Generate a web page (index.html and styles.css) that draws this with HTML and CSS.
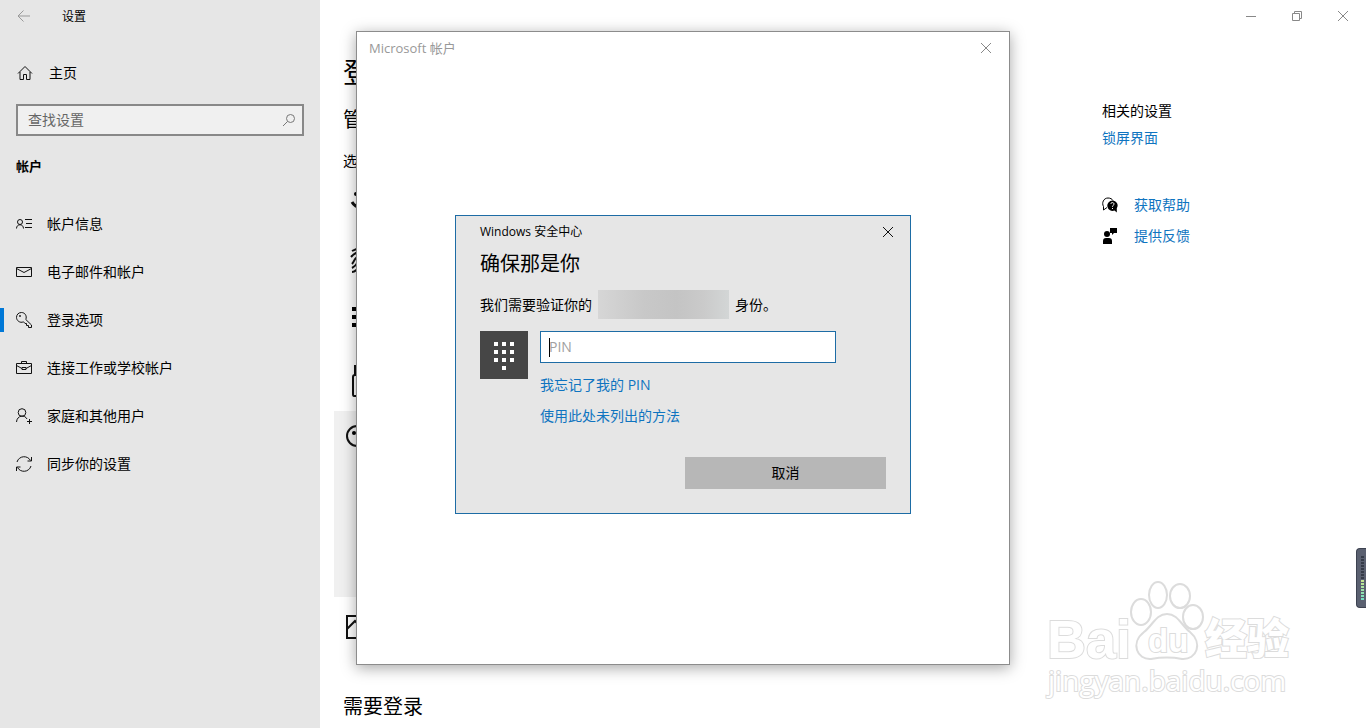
FILE: index.html
```
<!DOCTYPE html>
<html lang="zh-CN">
<head>
	<meta charset="UTF-8">
	<title>设置</title>
	<link rel="stylesheet" href="styles.css">
</head>
<body>
	<aside class="sidebar">
		<div class="titlebar">
			<button class="back" aria-label="返回"><svg width="14" height="14" viewBox="0 0 14 14"><path d="M13 7H1M6.500 1.500L1 7l5.500 5.500"/></svg></button>
			<span class="apptitle">设置</span>
		</div>
		<a class="home" href="#"><svg width="16" height="16" viewBox="0 0 16 16"><path d="M1 8.500L8 1.500l7 7M3 7v7.500h3.500V9.500h3v5H13V7"/></svg>主页</a>
		<div class="search">
			<input type="text" placeholder="查找设置" aria-label="查找设置">
			<svg width="14" height="14" viewBox="0 0 14 14"><circle cx="8.500" cy="5.500" r="4"/><path d="M5.500 8.500L1 13"/></svg>
		</div>
		<h2>帐户</h2>
		<nav>
			<a href="#"><svg width="16" height="16" viewBox="0 0 16 16"><circle cx="4" cy="6" r="2.500"/><path d="M.5 12.500C.5 7.500 7.500 7.500 7.500 12.500M9 3.500h7M10 7.500h6M9 11.500h7"/></svg>帐户信息</a>
			<a href="#"><svg width="16" height="16" viewBox="0 0 16 16"><path d="M.5 3.500h15v9H.5zM.5 4.500L8 8.500l7.500-4"/></svg>电子邮件和帐户</a>
			<a href="#" class="active"><svg width="16" height="16" viewBox="0 0 16 16"><path d="M9.800 7.500L15.500 13v2.500H12.500V13.500H10.500V11.500H9L7.500 9.800C4 11.500.5 8.500.5 5.500C.5 2.500 2.500.5 5.500.5C9 .5 11.200 4 9.800 7.500z"/><circle cx="4" cy="4" r=".6"/></svg>登录选项</a>
			<a href="#"><svg width="16" height="16" viewBox="0 0 16 16"><path d="M.5 3.500h15v10H.5zM5.500 3.500v-2h5v2M.5 5.500l5.500 3M15.500 5.500L10 8.500M6 7.500h4v2H6z"/></svg>连接工作或学校帐户</a>
			<a href="#"><svg width="16" height="16" viewBox="0 0 16 16"><circle cx="6" cy="4.500" r="3.800"/><path d="M.5 14C1 7 9 6.500 11 11M13.500 11v5M11 13.500h5"/></svg>家庭和其他用户</a>
			<a href="#"><svg width="16" height="16" viewBox="0 0 16 16"><path d="M1 6C3 -.5 11.500-1 14.500 4.500M15.500 1v4h-4M15 10C13 16.500 4.500 17 1.500 11.500M.5 15v-4h4"/></svg>同步你的设置</a>
		</nav>
	</aside>
	<main>
		<div class="titlebar controls">
			<button aria-label="最小化"><svg width="10" height="10" viewBox="0 0 10 10"><path d="M0 5.500h10"/></svg></button>
			<button aria-label="还原"><svg width="10" height="10" viewBox="0 0 10 10"><path d="M.5 2.500h7v7h-7zM2.500 2.500v-2h7v7h-2"/></svg></button>
			<button aria-label="关闭"><svg width="10" height="10" viewBox="0 0 10 10"><path d="M0 0l10 10M10 0L0 10"/></svg></button>
		</div>
		<div class="columns">
			<section class="content">
				<h1>登录</h1>
				<h3>管理登录方式</h3>
				<p>选择登录选项</p>
				<ul class="options">
					<li><svg width="32" height="32" viewBox="0 0 32 32"><g class="solid"><circle cx="12" cy="9" r="2"/><circle cx="21" cy="9" r="2"/></g><path class="thick" d="M8 17C12 24 21 24 25 17"/></svg></li>
					<li><svg width="32" height="32" viewBox="0 0 32 32"><path d="M8 6C13 3 20 3 25 6M7 12C13 5 22 5 25 12M8 19C11 16 10 12 16 11C23 11 23 18 22 24M8 23C14 20 13 16 16 15C20 16 18 22 17 27M8 27C12 27 14 24 16 20"/></svg></li>
					<li><svg class="solid" width="32" height="32" viewBox="0 0 32 32"><path d="M8 2h4v4H8zM16 2h4v4h-4zM24 2h4v4h-4zM8 10h4v4H8zM16 10h4v4h-4zM24 10h4v4h-4zM8 18h4v4H8zM16 18h4v4h-4zM24 18h4v4h-4zM16 26h4v4h-4z"/></svg></li>
					<li><svg width="32" height="32" viewBox="0 0 32 32"><path d="M11 10V1h11v9M9 12q0-2 2-2h11q2 0 2 2v19H10q-1 0-1-2z"/></svg></li>
					<li class="selected"><svg width="32" height="32" viewBox="0 0 32 32"><circle cx="13" cy="11" r="10"/><circle class="solid" cx="10" cy="8" r="2"/></svg></li>
					<li><svg width="32" height="32" viewBox="0 0 32 32"><path d="M3 5h26v22H3zM3 18l8-8 8 8 4-4 6 6"/></svg></li>
				</ul>
				<h3 class="require">需要登录</h3>
			</section>
			<section class="related">
				<h4>相关的设置</h4>
				<a href="#">锁屏界面</a>
				<div class="support">
					<a href="#"><svg width="16" height="16" viewBox="0 0 16 16"><path class="bubble" d="M5 10.500L1.500 13V9.500C-.5 6 1.500 1 6 1C8.500 1 10 2 11 3.500"/><path class="solid" d="M10.500 3.500a5 5 0 0 1 4.300 7.700V15.500L12.500 13.500A5.200 5.200 0 1 1 10.500 3.500z"/><path class="mark" d="M8.800 7C9 5 12.200 5.200 12 7.200C11.800 8.300 10.500 8.300 10.500 9.800M10.500 11v1"/></svg>获取帮助</a>
					<a href="#"><svg class="solid" width="16" height="16" viewBox="0 0 16 16"><circle cx="5" cy="6" r="3"/><path d="M1 16v-3q0-3 3-3h3q3 0 3 3v3zM8 0h7v5h-3l-2 2V5H8z"/></svg>提供反馈</a>
				</div>
			</section>
		</div>
	</main>

	<!-- account window -->
	<div class="layer account-layer">
		<div class="account">
			<span>Microsoft 帐户</span>
			<button aria-label="关闭"><svg width="10" height="10" viewBox="0 0 10 10"><path d="M0 0l10 10M10 0L0 10"/></svg></button>
		</div>
	</div>

	<!-- pin dialog -->
	<div class="layer">
		<form class="dialog">
			<div class="dialog-head">
				<span>Windows 安全中心</span>
				<button type="button" aria-label="关闭"><svg width="10" height="10" viewBox="0 0 10 10"><path d="M0 0l10 10M10 0L0 10"/></svg></button>
			</div>
			<h2>确保那是你</h2>
			<p class="verify">我们需要验证你的<span class="masked"></span>身份。</p>
			<div class="pin">
				<div class="keypad"><svg class="solid" width="20" height="28" viewBox="0 0 20 28"><path d="M0 0h4v4H0zM8 0h4v4H8zM16 0h4v4h-4zM0 8h4v4H0zM8 8h4v4H8zM16 8h4v4h-4zM0 16h4v4H0zM8 16h4v4H8zM16 16h4v4h-4zM8 24h4v4H8z"/></svg></div>
				<div class="fields">
					<div class="pinbox"><input type="password" placeholder="PIN" aria-label="PIN"></div>
					<a href="#">我忘记了我的 PIN</a>
					<a href="#">使用此处未列出的方法</a>
				</div>
			</div>
			<button type="button" class="cancel">取消</button>
		</form>
	</div>

	<div class="watermark">
		<svg width="280" height="140" viewBox="0 0 280 140">
			<text class="latin" x="17" y="88">Bai</text>
			<g>
				<ellipse cx="111" cy="42" rx="10" ry="13"/>
				<ellipse cx="128" cy="25" rx="9" ry="13"/>
				<ellipse cx="150" cy="26" rx="10" ry="12"/>
				<ellipse cx="163" cy="47" rx="10" ry="12"/>
				<path d="M137 44C126 44 123 55 114 62C100 73 107 90 121 89C132 87 142 87 152 89C167 90 173 73 160 62C151 55 148 44 137 44z"/>
			</g>
			<text class="du" x="118" y="82">du</text>
			<text class="cjk" x="175" y="84">经验</text>
			<text class="url" x="18" y="121">jingyan.baidu.com</text>
		</svg>
	</div>
	<div class="meter"><i class="idle"></i><i class="level"></i></div>
</body>
</html>
```
FILE: styles.css
```
*{box-sizing: border-box; margin: 0; padding: 0;}
body{
	display: flex;
	height: 100vh;
	overflow: hidden;
	background: #fff;
	color: #000;
	font: 14px/20px "Open Sans", "Noto Sans CJK SC", sans-serif;
}
a{
	color: #0f74c0;
	text-decoration: none;
}
button{
	border: 0;
	background: none;
	font: inherit;
	color: inherit;
}
ul{list-style: none;}
h1, h2, h3, h4{font-weight: 400;}
svg{
	display: block;
	flex: none;
	fill: none;
	stroke: #111;
}
.solid{
	fill: #000;
	stroke: none;
}
.titlebar{
	display: flex;
	align-items: center;
	height: 32px;
	font-size: 12px;
}

/* left menu */
.sidebar{
	flex: none;
	width: 320px;
	background: #e6e6e6;
}
.back{
	width: 48px;
	padding-left: 17px;
}
.back svg{stroke: #999;}
.apptitle{padding: 2px 0 0 14px;}
.home{
	display: flex;
	align-items: center;
	gap: 16px;
	height: 48px;
	margin-top: 17px;
	padding-left: 17px;
	color: #000;
}
.search{
	display: flex;
	align-items: center;
	height: 32px;
	margin: 7px 16px 20px;
	padding: 0 6px 0 10px;
	border: 2px solid #888;
	background: #f0f0f0;
}
.search input{
	flex: 1;
	min-width: 0;
	border: 0;
	outline: 0;
	background: none;
	font: inherit;
}
.search input::placeholder{color: #666;}
.search svg{stroke: #777;}
.sidebar h2{
	padding-left: 16px;
	font-size: 13px;
	font-weight: 700;
}
nav{margin-top: 24px;}
nav a{
	display: flex;
	align-items: center;
	gap: 15px;
	height: 48px;
	padding-left: 16px;
	color: #000;
}
nav .active{
	background: linear-gradient(#0078d7, #0078d7) 0 50% / 4px 24px no-repeat;
}

/* page */
main{
	flex: 1;
	min-width: 0;
}
.controls{justify-content: flex-end;}
.controls button{
	width: 46px;
	padding-left: 18px;
}
.controls svg, .account svg{stroke: #888;}
.columns{display: flex;}
.content{
	flex: 1;
	padding: 26px 0 0 14px;
}
.content h1, .content h3, .content p{padding-left: 9px;}
.content h1{
	font-size: 28px;
	line-height: 28px;
}
.content h3{
	margin-top: 20px;
	font-size: 20px;
	line-height: 28px;
}
.content p{margin: 17px 0 0;}
.options{max-width: 600px;}
.options li{
	height: 60px;
	padding: 14px 10px;
}
.options svg{stroke-width: 2px;}
.options .solid{stroke-width: 0;}
.options .thick{stroke-width: 3px;}
.options .selected{
	height: 186px;
	background: #f0f0f0;
}
.content .require{margin-top: 36px;}
.related{
	flex: none;
	width: 264px;
	padding-top: 69px;
}
.related h4{
	margin-bottom: 7px;
	font-size: 14px;
}
.support{
	display: flex;
	flex-direction: column;
	gap: 11px;
	margin-top: 47px;
}
.support a{
	display: flex;
	align-items: center;
	gap: 16px;
}
.support .bubble{stroke: #000;}
.support .mark{stroke: #fff;}

/* windows */
.layer{
	position: absolute;
	inset: 0;
	display: flex;
	align-items: center;
	justify-content: center;
}
.account-layer{padding-bottom: 32px;}
.account{
	display: flex;
	align-items: flex-start;
	justify-content: space-between;
	width: 654px;
	height: 634px;
	padding: 6px 0 0 12px;
	border: 1px solid #8c8c8c;
	background: #fff;
	box-shadow: 0 3px 14px rgba(0,0,0,.35);
	color: #999;
	font-size: 13px;
}
.account button{padding: 5px 18px;}
.dialog{
	width: 456px;
	padding: 6px 24px 24px;
	border: 1px solid #1d6ca5;
	background: #e6e6e6;
}
.dialog-head{
	display: flex;
	align-items: center;
	justify-content: space-between;
	font-size: 12px;
}
.dialog-head button{padding: 0 17px 0 0; margin-right: -24px;}
.dialog h2{
	margin-top: 7px;
	font-size: 20px;
	line-height: 30px;
}
.verify{
	display: flex;
	align-items: center;
	margin-top: 11px;
	line-height: 29px;
}
.masked{
	width: 131px;
	height: 29px;
	margin: 0 6px;
	background: linear-gradient(90deg, #d6d6d6, #c8c8c8 35%, #c4c4c4 60%, #cacaca 80%, #d3d6d6);
}
.pin{
	display: flex;
	gap: 12px;
	margin-top: 12px;
}
.keypad{
	display: flex;
	align-items: center;
	justify-content: center;
	width: 48px;
	height: 48px;
	padding-top: 3px;
	background: #464646;
}
.keypad svg{fill: #fff;}
.fields{
	display: flex;
	flex-direction: column;
	width: 296px;
	gap: 11px;
}
.pinbox{
	position: relative;
	margin-bottom: 1px;
}
.pinbox::before{
	content: "";
	position: absolute;
	top: 7px;
	left: 9px;
	width: 1px;
	height: 19px;
	background: #000;
}
.pinbox input{
	display: block;
	width: 100%;
	height: 32px;
	padding: 0 8px;
	border: 1px solid #1d6ca5;
	outline: 0;
	background: #fff;
	font: inherit;
}
.pinbox input::placeholder{color: #a0a0a0;}
.cancel{
	display: block;
	width: calc(50% - 2px);
	height: 32px;
	margin: 31px 0 0 auto;
	background: #b7b7b7;
}

/* corner overlays */
.watermark{
	position: absolute;
	right: 56px;
	bottom: 18px;
}
.watermark svg{
	fill: #fff;
	stroke: #dcdcdc;
	stroke-width: 2px;
}
.watermark text{paint-order: stroke;}
.latin{font: 700 54px "Liberation Sans", sans-serif;}
.du{font: 700 33px "Liberation Sans", sans-serif;}
.cjk{font: 900 42px "Noto Sans CJK SC", sans-serif;}
.url{font: 500 28px "Open Sans", sans-serif;}
.meter{
	position: absolute;
	right: 0;
	bottom: 120px;
	width: 10px;
	height: 60px;
	padding: 7px 2px 0 4px;
	border: 1px solid #3c4250;
	border-right: 0;
	border-radius: 4px 0 0 4px;
	background: #5a6070;
}
.meter i{
	display: block;
	height: 24px;
	background: repeating-linear-gradient(#353b48 0 2px, #5a6070 2px 3px);
}
.meter .level{
	height: 21px;
	background: repeating-linear-gradient(transparent 0 2px, #5a6070 2px 3px), linear-gradient(#c8e68c, #6ee0c8);
}
```
